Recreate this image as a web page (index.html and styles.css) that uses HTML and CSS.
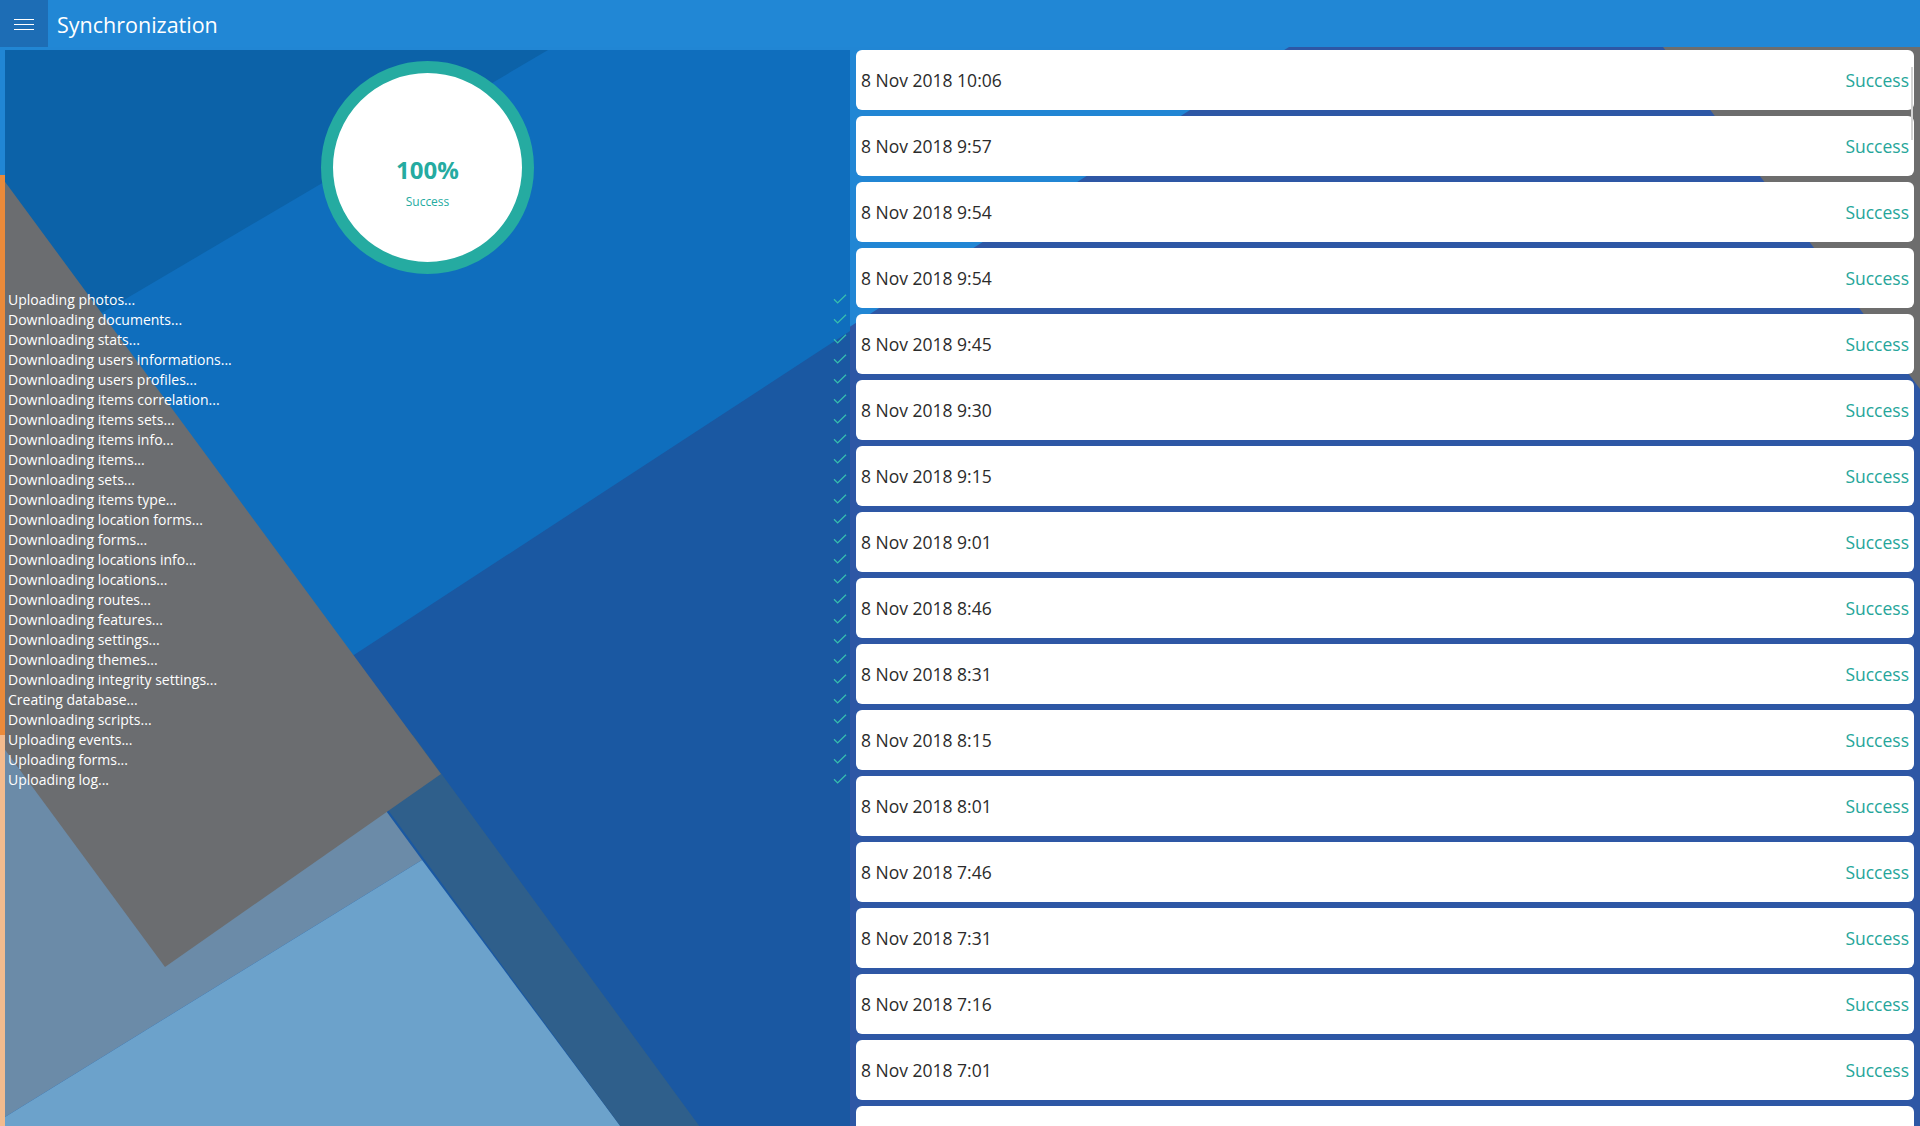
FILE: index.html
```html
<!DOCTYPE html>
<html lang="en">
<head>
    <meta name="viewport" content="width=device-width, initial-scale=1">
    <title>Synchronization</title>
    <link rel="stylesheet" href="styles.css">
</head>
<body>
    <div class="header">
        <div class="menu-btn">
            <svg width="20" height="12" viewBox="0 0 20 12">
                <path d="M0 0.5h20M0 5.5h20M0 10.5h20" stroke="#fff" stroke-width="1"/>
            </svg>
        </div>
        <div class="title">Synchronization</div>
    </div>

    <div class="main">
        <!-- page backdrop -->
        <svg class="backdrop" viewBox="0 47 1920 1079" preserveAspectRatio="none">
            <rect x="0" y="47" width="1920" height="1079" fill="#2186d4"/>
            <polygon points="1289,47 1920,47 1920,1126 0,1126 0,868" fill="#2e57a5"/>
            <polygon points="1663,47 1920,47 1920,389" fill="#6d6d6d"/>
            <rect x="0" y="175" width="5" height="560" fill="#ea8a3a"/>
            <rect x="0" y="735" width="5" height="391" fill="#f2bb8e"/>
        </svg>

        <div class="sync-pane">
            <svg class="backdrop" viewBox="5 50 845 1076" preserveAspectRatio="none">
                <rect x="5" y="50" width="845" height="1076" fill="#0f6ebd"/>
                <polygon points="5,50 548,50 5,370" fill="#0c62a8"/>
                <polygon points="850,331 850,1126 5,1126 5,883" fill="#1a58a2"/>
                <polygon points="0,490 151,490 422,860 0,1120" fill="#6b8ba8"/>
                <polygon points="0,1120 422,860 621,1127 0,1127" fill="#6ca2cb"/>
                <polygon points="333,735 413,735 700,1127 621,1127" fill="#2f5f8b"/>
                <polygon points="0,175 441,774 165,967 -276,368" fill="#6b6d70"/>
            </svg>

            <div class="progress-ring">
                <div class="percent">100%</div>
                <div class="status">Success</div>
            </div>

            <div class="steps" id="steps"></div>
        </div>

        <div class="history" id="history">
            <div class="scroll-thumb"></div>
        </div>
    </div>

    <script>
        const steps = [
            "Uploading photos...",
            "Downloading documents...",
            "Downloading stats...",
            "Downloading users informations...",
            "Downloading users profiles...",
            "Downloading items correlation...",
            "Downloading items sets...",
            "Downloading items info...",
            "Downloading items...",
            "Downloading sets...",
            "Downloading items type...",
            "Downloading location forms...",
            "Downloading forms...",
            "Downloading locations info...",
            "Downloading locations...",
            "Downloading routes...",
            "Downloading features...",
            "Downloading settings...",
            "Downloading themes...",
            "Downloading integrity settings...",
            "Creating database...",
            "Downloading scripts...",
            "Uploading events...",
            "Uploading forms...",
            "Uploading log..."
        ];

        const times = [
            "10:06", "9:57", "9:54", "9:54", "9:45", "9:30", "9:15", "9:01",
            "8:46", "8:31", "8:15", "8:01", "7:46", "7:31", "7:16", "7:01", "6:46"
        ];

        const check = '<svg class="check" width="14" height="10" viewBox="0 0 14 10">' +
            '<path d="M1 5.3 L4.6 8.9 L13 0.8" fill="none" stroke="#36bfae" stroke-width="1.3"/></svg>';

        const stepList = document.getElementById('steps');
        steps.forEach(function (text) {
            const row = document.createElement('div');
            row.className = 'step';
            row.innerHTML = '<span>' + text + '</span>' + check;
            stepList.appendChild(row);
        });

        const history = document.getElementById('history');
        times.forEach(function (time) {
            const card = document.createElement('div');
            card.className = 'sync-card';
            card.innerHTML = '<span class="date">8 Nov 2018 ' + time + '</span>' +
                '<span class="result">Success</span>';
            history.appendChild(card);
        });
    </script>
</body>
</html>
```

FILE: styles.css
```css
body {
    font-family: 'Open Sans', 'Noto Sans', sans-serif;
    margin: 0;
    padding: 0;
    width: 1920px;
    height: 1126px;
    overflow: hidden;
    background-color: #2186d4;
}

.header {
    height: 47px;
    display: flex;
    align-items: stretch;
    background-color: #2187d5;
}

.menu-btn {
    width: 48px;
    display: flex;
    align-items: center;
    justify-content: center;
    background-color: #1d6db5;
}

.menu-btn svg {
    margin-top: 2px;
}

.title {
    padding-left: 9px;
    font-size: 21.5px;
    line-height: 49px;
    color: #fff;
}

.main {
    position: relative;
    height: 1079px;
    display: flex;
    gap: 6px;
    padding: 3px 6px 0 5px;
    box-sizing: border-box;
}

.backdrop {
    position: absolute;
    left: 0;
    top: 0;
    width: 100%;
    height: 100%;
}

.sync-pane {
    position: relative;
    width: 845px;
    height: 1076px;
    flex-shrink: 0;
    padding: 11px 3px 0 3px;
    box-sizing: border-box;
    overflow: hidden;
}

.progress-ring {
    position: relative;
    width: 213px;
    height: 213px;
    margin: 0 auto;
    padding-top: 82px;
    border: 12.5px solid #25aba1;
    border-radius: 50%;
    box-sizing: border-box;
    background-color: #fff;
    text-align: center;
    color: #25aba1;
}

.percent {
    font-size: 24px;
    font-weight: 700;
    line-height: 30px;
}

.status {
    font-size: 12px;
    line-height: 18px;
    margin-top: 8px;
}

.steps {
    position: relative;
    margin-top: 15px;
}

.step {
    height: 20px;
    display: flex;
    align-items: center;
    justify-content: space-between;
    font-size: 14px;
    color: #fff;
}

.history {
    position: relative;
    flex: 1;
    display: flex;
    flex-direction: column;
    gap: 6px;
    overflow: hidden;
}

.sync-card {
    flex-shrink: 0;
    height: 60px;
    display: flex;
    align-items: center;
    justify-content: space-between;
    padding: 0 5px;
    background-color: #fff;
    border-radius: 6px;
    font-size: 17.5px;
}

.date {
    color: #2b2b2b;
}

.result {
    color: #26a69a;
}

.scroll-thumb {
    position: absolute;
    right: 1px;
    top: 17px;
    width: 2px;
    height: 73px;
    background-color: #d4d4d4;
    z-index: 2;
}
```
